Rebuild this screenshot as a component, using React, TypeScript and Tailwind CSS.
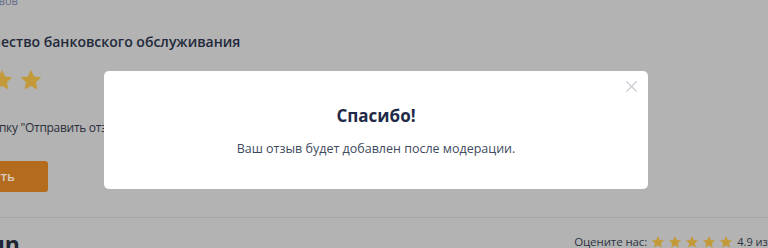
import { X } from "lucide-react";

function Star({ className }: { className: string }) {
  return (
    <svg viewBox="0 0 24 24" className={className} fill="currentColor">
      <path d="M12 1.8l3.1 6.6 7.2.9-5.3 5 1.4 7.1L12 17.9l-6.4 3.5 1.4-7.1-5.3-5 7.2-.9z" />
    </svg>
  );
}

export default function App() {
  return (
    <div className="relative h-[248px] w-[768px] overflow-hidden bg-[#b3b3b3] font-['Open_Sans',sans-serif]">
      {/* page behind the overlay */}
      <div className="flex flex-col">
        <div className="-mt-[5px] -ml-[27px] text-[11px] leading-[12px] text-[#5e6886]">
          отзывов
        </div>
        <h2 className="-ml-[25px] mt-[23px] whitespace-nowrap text-[14px] font-semibold leading-[24px] text-[#22293a]">
          Качество банковского обслуживания
        </h2>
        <div className="-ml-[97px] mt-[14px] flex gap-[5px] text-[#c29a3a]">
          <Star className="h-[24px] w-[24px]" />
          <Star className="h-[24px] w-[24px]" />
          <Star className="h-[24px] w-[24px]" />
          <Star className="h-[24px] w-[24px]" />
          <Star className="h-[24px] w-[24px]" />
        </div>
        <p className="-ml-[75px] mt-[26px] whitespace-nowrap text-[12px] leading-[20px] tracking-[-0.3px] text-[#2a2f3b]">
          Нажмите кнопку "Отправить отзыв"
        </p>
        <div className="-ml-[90px] mt-[23px] flex h-[31px] w-[138px] items-center justify-center rounded-[3px] bg-[#b56b1e] text-[13px] font-semibold text-[#d9cbbd]">
          Отправить
        </div>
        <div className="mt-[25px] h-px w-full bg-[#a5a5a5]" />
        <div className="mt-[11px] flex items-start justify-between">
          <div className="-ml-[23px] text-[23px] font-bold leading-[30px] text-[#1e2433]">
            Sun
          </div>
          <div className="mt-[5px] -mr-[9px] flex items-center text-[12px] leading-[16px] text-[#2e3442]">
            <span className="text-[11.5px] tracking-[-0.1px]">Оцените нас:</span>
            <div className="ml-[4px] flex gap-[3px] text-[#c29a3a]">
              <Star className="h-[14px] w-[14px]" />
              <Star className="h-[14px] w-[14px]" />
              <Star className="h-[14px] w-[14px]" />
              <Star className="h-[14px] w-[14px]" />
              <Star className="h-[14px] w-[14px]" />
            </div>
            <span className="ml-[4px] text-[11px]">4.9 из 5</span>
          </div>
        </div>
      </div>

      {/* modal */}
      <div className="absolute left-[104px] top-[71px] flex h-[118px] w-[544px] flex-col items-center rounded-[5px] bg-white pt-[31px]">
        <button className="absolute right-[7px] top-[6px] text-[#c6cad1]">
          <X className="h-[19px] w-[19px]" strokeWidth={1.4} />
        </button>
        <h3 className="text-[17px] font-bold leading-[28px] text-[#1f2a48]">Спасибо!</h3>
        <p className="mt-[9px] text-[12.5px] leading-[20px] text-[#3e4a5e]">
          Ваш отзыв будет добавлен после модерации.
        </p>
      </div>
    </div>
  );
}
